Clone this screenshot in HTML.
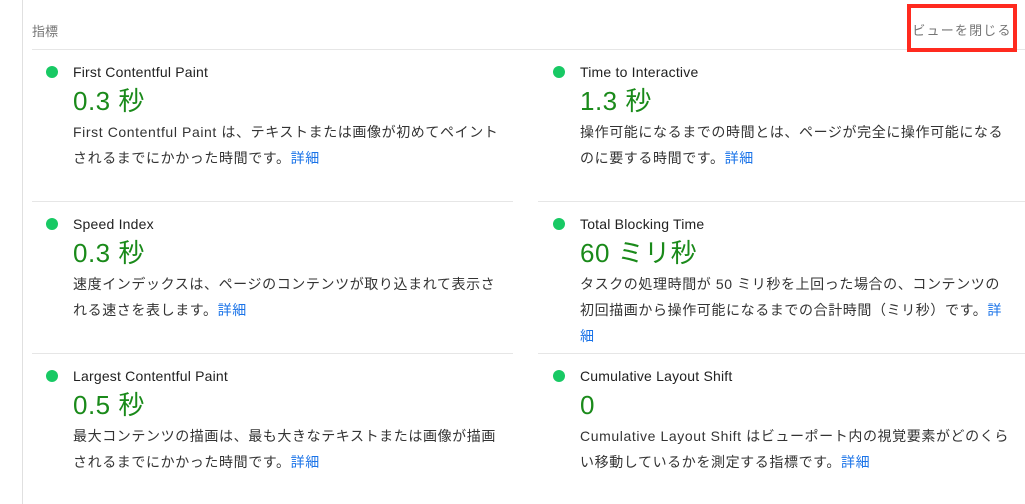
<!DOCTYPE html>
<html><head><meta charset="utf-8"><style>
body{margin:0;width:1025px;height:504px;background:#fff;overflow:hidden;font-family:"Liberation Sans","Noto Sans CJK JP",sans-serif;position:relative;color:#212121}
.vl{position:absolute;left:22px;top:0;width:1px;height:504px;background:#e0e0e0}
.hdr{position:absolute;left:32px;top:21px;font-size:13px;color:#757575}
.close{position:absolute;box-sizing:border-box;left:907px;top:4px;width:110px;height:48px;border:4px solid #ff2a1f;font-size:13px;color:#757575;letter-spacing:1.2px;text-align:center;line-height:46px;background:#fff}
.hl{position:absolute;height:1px;background:#e6e6e6}
.m{position:absolute;width:430px}
.dot{position:absolute;left:-27px;top:4px;width:12px;height:12px;border-radius:50%;background:#18c964}
.t{font-size:14px;line-height:20px;color:#212121;letter-spacing:.2px}
.v{font-size:26px;color:#1a8a1a;line-height:34px;margin-top:2px;letter-spacing:.5px}
.d{font-size:14px;line-height:26px;color:#333;margin-top:1px;letter-spacing:.6px}
.d a{color:#1a73e8;text-decoration:none}
</style></head><body>
<div class="vl"></div>
<div class="hdr">指標</div>
<div class="hl" style="left:32px;width:993px;top:49px"></div>
<div class="close">ビューを閉じる</div>
<div class="hl" style="left:32px;width:481px;top:201px"></div>
<div class="hl" style="left:538px;width:487px;top:201px"></div>
<div class="hl" style="left:32px;width:481px;top:353px"></div>
<div class="hl" style="left:538px;width:487px;top:353px"></div>

<div class="m" style="left:73px;top:62px"><div class="dot"></div><div class="t">First Contentful Paint</div><div class="v">0.3 秒</div><div class="d">First Contentful Paint は、テキストまたは画像が初めてペイントされるまでにかかった時間です。<a>詳細</a></div></div>
<div class="m" style="left:580px;top:62px"><div class="dot"></div><div class="t">Time to Interactive</div><div class="v">1.3 秒</div><div class="d">操作可能になるまでの時間とは、ページが完全に操作可能になるのに要する時間です。<a>詳細</a></div></div>
<div class="m" style="left:73px;top:214px"><div class="dot"></div><div class="t">Speed Index</div><div class="v">0.3 秒</div><div class="d">速度インデックスは、ページのコンテンツが取り込まれて表示される速さを表します。<a>詳細</a></div></div>
<div class="m" style="left:580px;top:214px;width:430px"><div class="dot"></div><div class="t">Total Blocking Time</div><div class="v">60 ミリ秒</div><div class="d">タスクの処理時間が 50 ミリ秒を上回った場合の、コンテンツの初回描画から操作可能になるまでの合計時間（ミリ秒）です。<a>詳細</a></div></div>
<div class="m" style="left:73px;top:366px"><div class="dot"></div><div class="t">Largest Contentful Paint</div><div class="v">0.5 秒</div><div class="d">最大コンテンツの描画は、最も大きなテキストまたは画像が描画されるまでにかかった時間です。<a>詳細</a></div></div>
<div class="m" style="left:580px;top:366px"><div class="dot"></div><div class="t">Cumulative Layout Shift</div><div class="v">0</div><div class="d">Cumulative Layout Shift はビューポート内の視覚要素がどのくらい移動しているかを測定する指標です。<a>詳細</a></div></div>
</body></html>
